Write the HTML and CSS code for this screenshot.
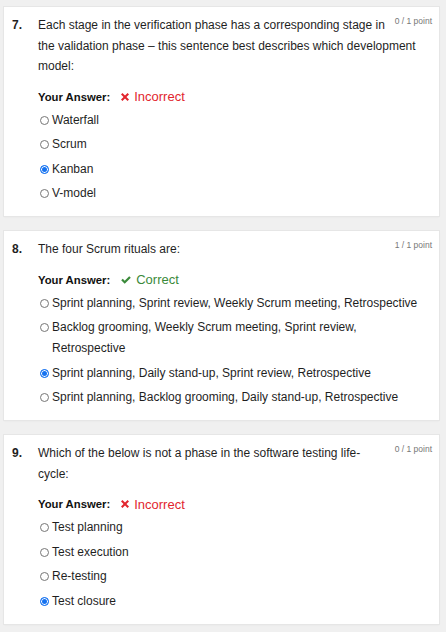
FILE: index.html
```html
<!DOCTYPE html>
<html lang="en">
<head>
<meta charset="utf-8">
<title>Quiz results</title>
<link rel="stylesheet" href="styles.css">
</head>
<body>
<main class="list">
  <section class="card">
    <div class="num">7.</div>
    <div class="body">
      <div class="points">0 / 1 point</div>
      <div class="question">Each stage in the verification phase has a corresponding stage in the validation phase – this sentence best describes which development model:</div>
      <div class="answer">
        <span class="label">Your Answer:</span>
        <span class="status bad"><svg class="icon" viewBox="0 0 10 10" width="8" height="8"><path d="M0 1.8 L1.8 0 L5 3.2 L8.2 0 L10 1.8 L6.8 5 L10 8.2 L8.2 10 L5 6.8 L1.8 10 L0 8.2 L3.2 5 Z" fill="currentColor"/></svg>Incorrect</span>
      </div>
      <ul class="options">
        <li class="opt"><span class="radio"></span><span class="opt-text">Waterfall</span></li>
        <li class="opt"><span class="radio"></span><span class="opt-text">Scrum</span></li>
        <li class="opt"><span class="radio checked"></span><span class="opt-text">Kanban</span></li>
        <li class="opt"><span class="radio"></span><span class="opt-text">V-model</span></li>
      </ul>
    </div>
  </section>

  <section class="card">
    <div class="num">8.</div>
    <div class="body">
      <div class="points">1 / 1 point</div>
      <div class="question">The four Scrum rituals are:</div>
      <div class="answer">
        <span class="label">Your Answer:</span>
        <span class="status good"><svg class="icon" viewBox="0 0 12 10" width="10" height="8"><path d="M0 5.4 L2 3.4 L4.4 5.8 L10 0.2 L12 2.2 L4.4 9.8 Z" fill="currentColor"/></svg>Correct</span>
      </div>
      <ul class="options">
        <li class="opt"><span class="radio"></span><span class="opt-text">Sprint planning, Sprint review, Weekly Scrum meeting, Retrospective</span></li>
        <li class="opt"><span class="radio"></span><span class="opt-text">Backlog grooming, Weekly Scrum meeting, Sprint review, Retrospective</span></li>
        <li class="opt"><span class="radio checked"></span><span class="opt-text">Sprint planning, Daily stand-up, Sprint review, Retrospective</span></li>
        <li class="opt"><span class="radio"></span><span class="opt-text">Sprint planning, Backlog grooming, Daily stand-up, Retrospective</span></li>
      </ul>
    </div>
  </section>

  <section class="card">
    <div class="num">9.</div>
    <div class="body">
      <div class="points">0 / 1 point</div>
      <div class="question">Which of the below is not a phase in the software testing life-cycle:</div>
      <div class="answer">
        <span class="label">Your Answer:</span>
        <span class="status bad"><svg class="icon" viewBox="0 0 10 10" width="8" height="8"><path d="M0 1.8 L1.8 0 L5 3.2 L8.2 0 L10 1.8 L6.8 5 L10 8.2 L8.2 10 L5 6.8 L1.8 10 L0 8.2 L3.2 5 Z" fill="currentColor"/></svg>Incorrect</span>
      </div>
      <ul class="options">
        <li class="opt"><span class="radio"></span><span class="opt-text">Test planning</span></li>
        <li class="opt"><span class="radio"></span><span class="opt-text">Test execution</span></li>
        <li class="opt"><span class="radio"></span><span class="opt-text">Re-testing</span></li>
        <li class="opt"><span class="radio checked"></span><span class="opt-text">Test closure</span></li>
      </ul>
    </div>
  </section>
</main>
</body>
</html>
```
FILE: styles.css
```css
html, body {
  margin: 0;
  padding: 0;
  background: #f0f0f0;
}

body {
  font-family: "Liberation Sans", Arial, sans-serif;
  color: #1f1f1f;
}

.list {
  display: flex;
  flex-direction: column;
  gap: 15px;
  padding: 7px 7px 8px 4px;
}

.card {
  display: flex;
  background: #ffffff;
  box-shadow: 0 0 0 1px #e6e6e6, 0 1px 2px rgba(0, 0, 0, 0.06);
  padding: 8px 7px 12px 8px;
}

.num {
  flex: 0 0 26px;
  font-size: 12px;
  font-weight: bold;
  line-height: 20.5px;
}

.body {
  flex: 1;
  min-width: 0;
}

.points {
  float: right;
  margin-left: 8px;
  font-size: 8.5px;
  line-height: 13px;
  color: #777777;
}

.question {
  font-size: 12px;
  line-height: 20.5px;
}

.answer {
  margin-top: 10px;
  display: flex;
  align-items: center;
  height: 20px;
}

.label {
  font-size: 11.3px;
  font-weight: bold;
  margin-right: 11px;
  color: #111111;
}

.status {
  display: inline-flex;
  align-items: center;
  font-size: 13px;
}

.status .icon {
  margin-right: 5px;
}

.status.bad {
  color: #e2262e;
}

.status.good {
  color: #3b8a3a;
}

.options {
  list-style: none;
  margin: 3px 0 0 0;
  padding: 0 8px 0 2px;
}

.opt {
  display: flex;
  align-items: flex-start;
  font-size: 12px;
  line-height: 21px;
}

.opt + .opt {
  margin-top: 3.5px;
}

.radio {
  flex: 0 0 auto;
  box-sizing: border-box;
  width: 9px;
  height: 9px;
  margin-top: 6px;
  margin-right: 3px;
  border: 1px solid #767676;
  border-radius: 50%;
  background: #ffffff;
}

.radio.checked {
  border-color: #1572f0;
  background: #1572f0;
  box-shadow: inset 0 0 0 1px #ffffff;
}

.opt-text {
  flex: 1;
}
```
